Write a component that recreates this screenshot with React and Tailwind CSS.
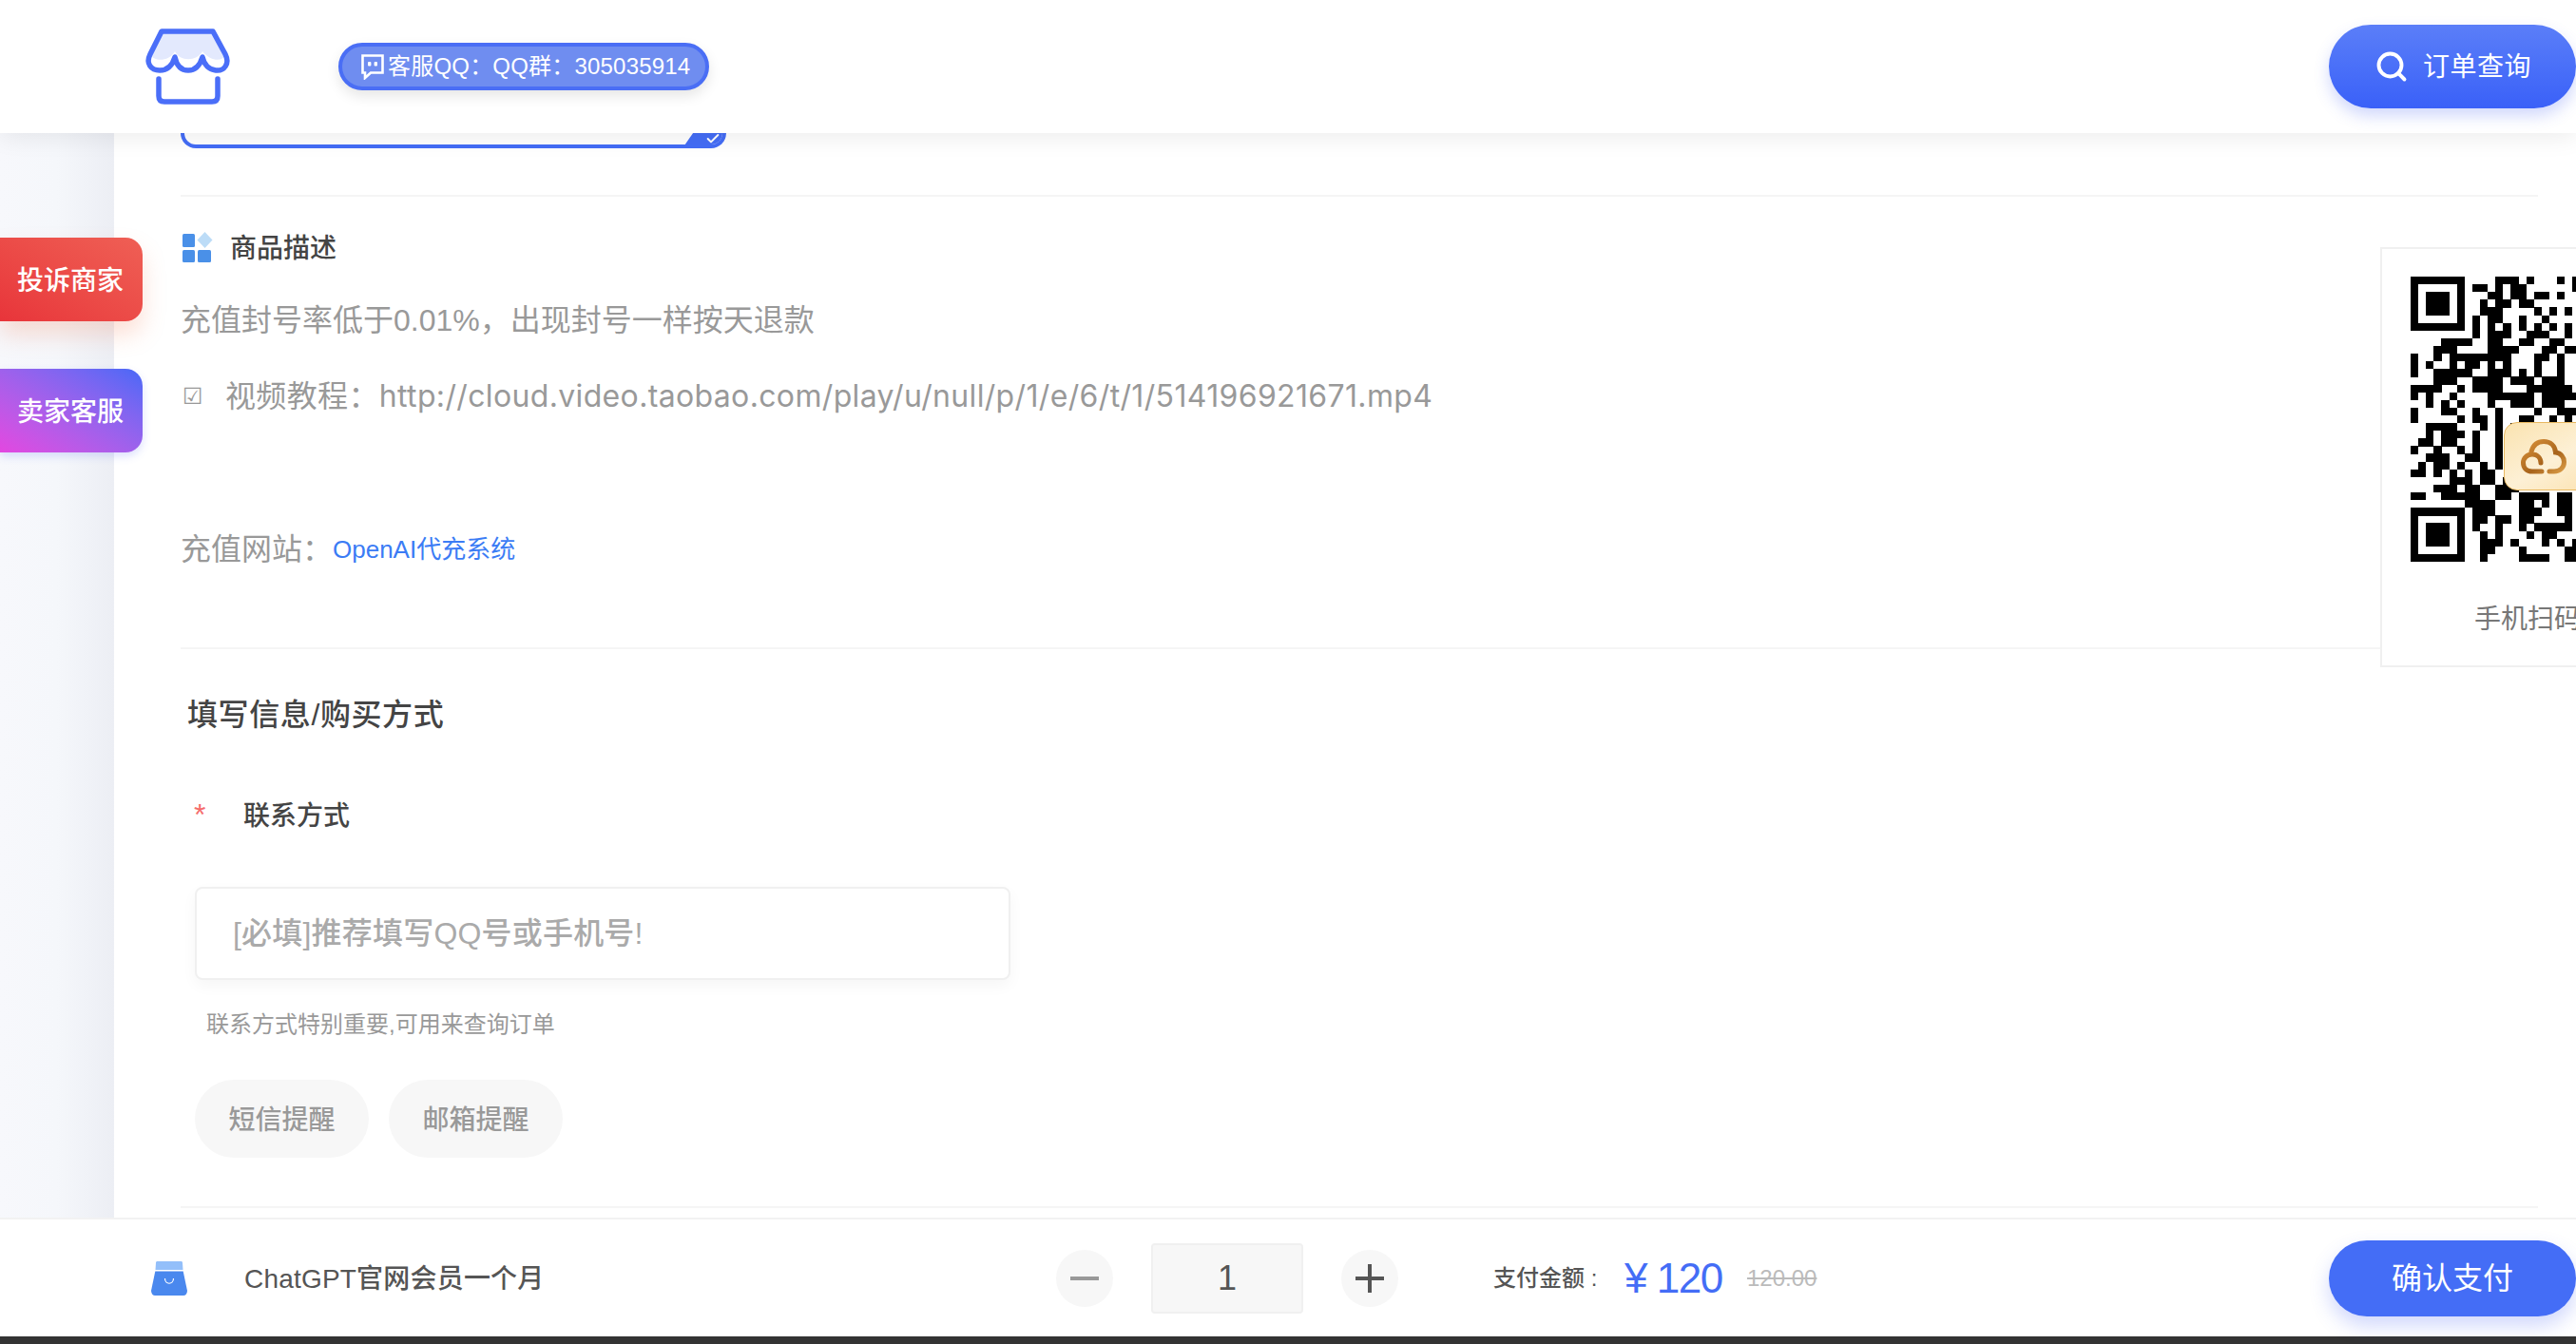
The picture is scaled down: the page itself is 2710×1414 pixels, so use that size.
import React from "react";
import { Check, Search } from "lucide-react";

// dark modules of the QR code per row, only the 22 visible columns
const qrRows = [
  [0,1,2,3,4,5,6,11,12,13,15,19,21],
  [0,6,8,9,11,13,14,21],
  [0,2,3,4,6,10,11,13,14,16,17,19],
  [0,2,3,4,6,9,11,12,14,15],
  [0,2,3,4,6,9,10,11,16,18,20],
  [0,6,8,10,11,14,17],
  [0,1,2,3,4,5,6,8,10,12,14,16,18,20],
  [8,10,11,12,15,16,17,20],
  [4,5,6,7,10,11,14,15,18,19],
  [3,4,5,10,11,12,13,17,18,20,21],
  [0,3,5,6,7,8,9,10,11,12,16,17,19],
  [0,2,5,7,8,10,12,16,19],
  [0,3,4,5,6,7,10,11,12,14,16,19],
  [3,4,5,8,9,10,11,13,14,15,17,18,19],
  [0,1,2,3,6,8,9,10,11,15,16,17,18,19,20],
  [0,2,5,10,11,12,13,14,15,17,18,19,20,21],
  [2,4,6,10,13,14,15,17,18,19],
  [0,4,5,8,11,16,19,20,21],
  [0,6,8,9,11,14,15,18,20],
  [2,3,4,5,9,11,13,16,17,20,21],
  [2,4,5,6,8,11,14,17,19],
  [1,2,4,5,8,11],
  [0,3,6,8,11],
  [2,3,4,7,8,11],
  [1,3,4,6,9,11],
  [0,1,3,5,7,9,10],
  [5,6,7,9,10,12],
  [3,4,5,7,8,11,12,13],
  [0,1,4,5,6,7,8,11,12,14,15,16,17,19,20],
  [7,8,9,10,14,15,17,19,20],
  [0,1,2,3,4,5,6,8,9,10,14,15,16,19,20],
  [0,6,8,9,11,12,14,15,20],
  [0,2,3,4,6,8,11,14,16,17,18,19,20],
  [0,2,3,4,6,9,11,15,17,18],
  [0,2,3,4,6,9,10,11,13,17,19,21],
  [0,6,9,10,14,20,21],
  [0,1,2,3,4,5,6,9,14,15,16,17,20,21],
];

function QrCode() {
  return (
    <svg viewBox="0 0 37 37" shapeRendering="crispEdges" className="w-[300px] h-[300px] shrink-0">
      {qrRows.map((cols, y) =>
        cols.map((x) => <rect key={`${x}-${y}`} x={x} y={y} width="1.02" height="1.02" fill="#000" />)
      )}
    </svg>
  );
}

function ShopLogo() {
  return (
    <svg viewBox="0 0 100 90" className="w-[100px] h-[90px]" fill="none">
      <path d="M20 8H74L89 36C92 44 87 50 78 49C70 48 65 44 63 38C60 46 55 49 48 49C41 49 36 46 34 38C31 46 26 49 18 49C9 49 5 42 8 35Z" fill="#fff" />
      <path d="M20 8H74L87 33C84 40 72 40 63 29C57 40 39 40 34 29C28 40 12 40 9 33Z" fill="#e3e9fd" />
      <path d="M20 8H74L87 32C92 42 86 50 77 49C70 48 65 44 63 35C60 45 55 49 48 49C41 49 36 45 34 35C31 45 26 49 18 49C9 49 3 42 8 32Z" stroke="#4a6ef8" strokeWidth="5.5" strokeLinejoin="round" />
      <path d="M17 58V76C17 80 19 82 23 82H73C77 82 79 80 79 76V58" stroke="#4a6ef8" strokeWidth="5.5" strokeLinecap="round" />
    </svg>
  );
}

function ChatIcon() {
  return (
    <svg viewBox="0 0 24 28" className="w-[24px] h-[28px] shrink-0" fill="none">
      <path d="M1.5 2.5H22.5V20.5H10L4 26V20.5H1.5Z" stroke="#fff" strokeWidth="2.6" />
      <rect x="7" y="9" width="3.4" height="4.5" rx="1" fill="#fff" />
      <rect x="13.6" y="9" width="3.4" height="4.5" rx="1" fill="#fff" />
    </svg>
  );
}

function CloudIcon() {
  return (
    <svg viewBox="0 0 48 37" className="w-[48px] h-[37px]" fill="none">
      <defs>
        <linearGradient id="cloudGold" x1="0" y1="0" x2="1" y2="1">
          <stop offset="0" stopColor="#d9923a" />
          <stop offset="0.6" stopColor="#a8641c" />
          <stop offset="1" stopColor="#d99a45" />
        </linearGradient>
      </defs>
      <path
        d="M22 34H12C6 34 2.500 30 2.500 25C2.500 20 6.500 16 12 16C17.500 16 21 20 21 25M11 13C13 6 18 2.500 24 2.500C31 2.500 36 7 36.500 14C42 14.500 45.500 19 45.500 24C45.500 30 41 34 35 34H30"
        stroke="url(#cloudGold)"
        strokeWidth="5"
        strokeLinecap="round"
      />
    </svg>
  );
}

function GridIcon() {
  return (
    <svg viewBox="0 0 32 32" className="w-[32px] h-[32px] shrink-0">
      <rect x="0" y="2" width="13" height="14" rx="1.5" fill="#4a90e8" />
      <rect x="0" y="19" width="13" height="13" rx="1.5" fill="#4a90e8" />
      <rect x="16" y="19" width="14" height="13" rx="1.5" fill="#4a90e8" />
      <path d="M23.500 0L31.500 8.500L23.500 17L15.500 8.500Z" fill="#bcdcf7" />
    </svg>
  );
}

function BagIcon() {
  return (
    <svg viewBox="0 0 38 36" className="w-[38px] h-[36px] shrink-0">
      <path d="M5 1.500C5 .6 5.600 0 6.500 0H31.500C32.400 0 33 .6 33 1.500L33.500 9H4.500Z" fill="#93bffa" />
      <path d="M4.300 10.500H33.700L38 31C38 34 36 36 34 36H4C2 36 0 34 0 31Z" fill="#4a88ee" />
      <path d="M14.500 18C14.500 25 23.500 25 23.500 18" stroke="#fff" strokeWidth="1.200" fill="none" />
    </svg>
  );
}

export default function App() {
  return (
    <div className="relative w-[2710px] h-[1414px] overflow-hidden flex flex-col bg-white font-['Liberation_Sans','Noto_Sans_CJK_SC',sans-serif]">

      {/* Header */}
      <header className="relative z-10 h-[140px] shrink-0 bg-white flex items-center shadow-[0_4px_24px_rgba(0,0,0,0.08)]">
        <div className="ml-[150px]">
          <ShopLogo />
        </div>
        <div className="ml-[106px] w-[390px] h-[50px] rounded-full border-4 border-[#4a6ef5] bg-[#6f8df0] flex items-center pl-[20px] gap-[4px] text-white text-[24px] whitespace-nowrap shadow-[0_6px_14px_rgba(0,0,0,0.1)]">
          <ChatIcon />
          <span className="tracking-[0.2px]">客服QQ：QQ群：305035914</span>
        </div>
        <button className="ml-auto w-[260px] h-[88px] rounded-full bg-gradient-to-b from-[#5b7ef8] to-[#3a60f8] text-white text-[28px] flex items-center pl-[48px] gap-[15px] shadow-[0_8px_16px_rgba(70,100,245,0.25)]">
          <Search size={36} strokeWidth={2.6} />
          <span className="tracking-[0.5px] pt-[2px]">订单查询</span>
        </button>
      </header>

      <div className="flex flex-1 min-h-0">
        {/* Left strip */}
        <div className="w-[120px] shrink-0 bg-gradient-to-r from-[#f7f8fc] via-[#f5f7fb] to-[#eceef4]" />

        {/* Main content */}
        <main className="flex-1 min-w-0 bg-white pl-[70px] pr-[40px]">
          <div className="relative w-[574px] h-[16px] border-x-4 border-b-4 border-[#446df6] rounded-b-[20px] overflow-hidden">
            <div className="absolute right-[-4px] bottom-[-4px] w-[46px] h-[20px] bg-[#446df6] [clip-path:polygon(100%_0,100%_100%,0_100%,30%_0)] flex items-center justify-end pr-[6px]">
              <Check size={16} strokeWidth={3} className="text-white" />
            </div>
          </div>

          <div className="mt-[49px] h-[2px] bg-[#f5f5f5]" />

          <div className="mt-[37px] h-[32px] flex items-center gap-[18px] ml-[2px] text-[28px] font-medium text-[#444] leading-none">
            <GridIcon />
            <span className="pt-[3px]">商品描述</span>
          </div>

          <p className="mt-[37px] text-[32px] leading-[48px] text-[#999]">
            充值封号率低于0.01%，出现封号一样按天退款
          </p>

          <p className="mt-[32px] text-[32px] leading-[48px] text-[#999] flex items-center">
            <span className="w-[47px] shrink-0 pl-[2px] text-[24px] font-['DejaVu_Sans',sans-serif]">☑</span>
            <span className="font-['Inter','Noto_Sans_CJK_SC',sans-serif] tracking-[0.35px]">视频教程：http://cloud.video.taobao.com/play/u/null/p/1/e/6/t/1/514196921671.mp4</span>
          </p>

          <p className="mt-[112px] pt-[1px] text-[32px] leading-[48px] text-[#999] flex items-center">
            <span className="w-[160px] shrink-0">充值网站：</span>
            <a className="text-[26px] text-[#3b7cf5]">OpenAI代充系统</a>
          </p>

          <div className="mt-[79px] h-[2px] bg-[#f5f5f5]" />

          <h2 className="mt-[45px] ml-[7px] text-[32px] leading-[48px] font-medium text-[#444] tracking-[0.6px]">
            填写信息/购买方式
          </h2>

          <div className="mt-[61px] ml-[14px] flex items-center h-[40px] text-[28px] font-medium text-[#444]">
            <span className="w-[52px] shrink-0 text-[32px] leading-none text-[#f56c6c] font-normal">*</span>
            <span className="pt-[3px]">联系方式</span>
          </div>

          <input
            placeholder="[必填]推荐填写QQ号或手机号!"
            className="block mt-[56px] ml-[15px] w-[858px] h-[98px] rounded-[8px] border-2 border-[#f0f0f0] bg-white pl-[38px] text-[32px] font-medium tracking-[0.2px] text-[#444] placeholder:text-[#aaa] shadow-[0_6px_16px_rgba(0,0,0,0.04)] outline-none"
          />

          <p className="mt-[29px] ml-[27px] text-[24px] leading-[36px] text-[#999]">
            联系方式特别重要,可用来查询订单
          </p>

          <div className="mt-[40px] ml-[15px] flex gap-[21px]">
            <button className="w-[183px] h-[82px] pt-[3px] rounded-full bg-[#f7f7f7] text-[28px] font-medium text-[#999]">短信提醒</button>
            <button className="w-[183px] h-[82px] pt-[3px] rounded-full bg-[#f7f7f7] text-[28px] font-medium text-[#999]">邮箱提醒</button>
          </div>

          <div className="mt-[51px] h-[2px] bg-[#f5f5f5]" />
        </main>
      </div>

      {/* Bottom bar */}
      <footer className="relative z-10 h-[125px] shrink-0 border-t-2 border-[#f2f2f2] bg-white flex items-center">
        <div className="ml-[159px]">
          <BagIcon />
        </div>
        <span className="ml-[60px] w-[854px] shrink-0 pt-[2px] text-[28px] font-medium text-[#555] whitespace-nowrap tracking-[0.2px]">ChatGPT官网会员一个月</span>
        <button className="w-[60px] h-[60px] rounded-full bg-[#f7f7f7] flex items-center justify-center">
          <span className="block w-[30px] h-[4px] bg-[#999]" />
        </button>
        <div className="ml-[40px] w-[160px] h-[74px] rounded-[4px] border-2 border-[#f0f0f0] bg-[#f7f7f7] flex items-center justify-center text-[36px] text-[#555]">1</div>
        <button className="relative ml-[40px] w-[60px] h-[60px] rounded-full bg-[#f7f7f7] flex items-center justify-center">
          <span className="block w-[30px] h-[4px] bg-[#555]" />
          <span className="absolute left-[28px] top-[15px] w-[4px] h-[30px] bg-[#555]" />
        </button>
        <span className="ml-[100px] w-[114px] shrink-0 text-[24px] font-medium text-[#555] whitespace-nowrap">支付金额 :</span>
        <span className="ml-[24px] w-[108px] shrink-0 text-[44px] font-medium text-[#446df6] whitespace-nowrap tracking-[-1.5px]">¥ 120</span>
        <span className="ml-[21px] text-[24px] text-[#bbb] line-through">120.00</span>
        <button className="ml-auto w-[260px] h-[80px] rounded-full bg-[#446df6] text-white text-[32px] shadow-[0_10px_20px_rgba(70,100,245,0.25)]">确认支付</button>
      </footer>
      <div className="h-[8px] shrink-0 bg-[#333]" />

      {/* Floating side buttons */}
      <div className="absolute left-0 top-[250px] z-20 flex flex-col gap-[50px]">
        <button className="w-[150px] h-[88px] pt-[3px] rounded-r-[18px] bg-gradient-to-tr from-[#e8343a] to-[#ef5f55] text-white text-[28px] font-medium pr-[2px] shadow-[0_14px_24px_rgba(245,130,90,0.25)]">投诉商家</button>
        <button className="w-[150px] h-[88px] pt-[3px] rounded-r-[18px] bg-gradient-to-tr from-[#e346e0] to-[#4568f7] text-white text-[28px] font-medium pr-[2px] shadow-[0_4px_10px_rgba(80,100,245,0.2)]">卖家客服</button>
      </div>

      {/* Floating QR card */}
      <div className="absolute left-[2504px] top-[260px] z-0 w-[340px] h-[442px] border-2 border-[#f0f0f0] bg-white flex flex-col pl-[30px] pt-[29px]">
        <div className="relative">
          <QrCode />
          <div className="absolute left-[98px] top-[153px] w-[120px] h-[72px] rounded-[14px] border border-[#e8b860] bg-gradient-to-br from-[#fae3b0] via-[#fdf0d5] to-[#fbdfa8] flex items-center pl-[17px]">
            <CloudIcon />
          </div>
        </div>
        <p className="mt-[40px] ml-[67px] text-[28px] text-[#777] whitespace-nowrap">手机扫码支付</p>
      </div>
    </div>
  );
}
